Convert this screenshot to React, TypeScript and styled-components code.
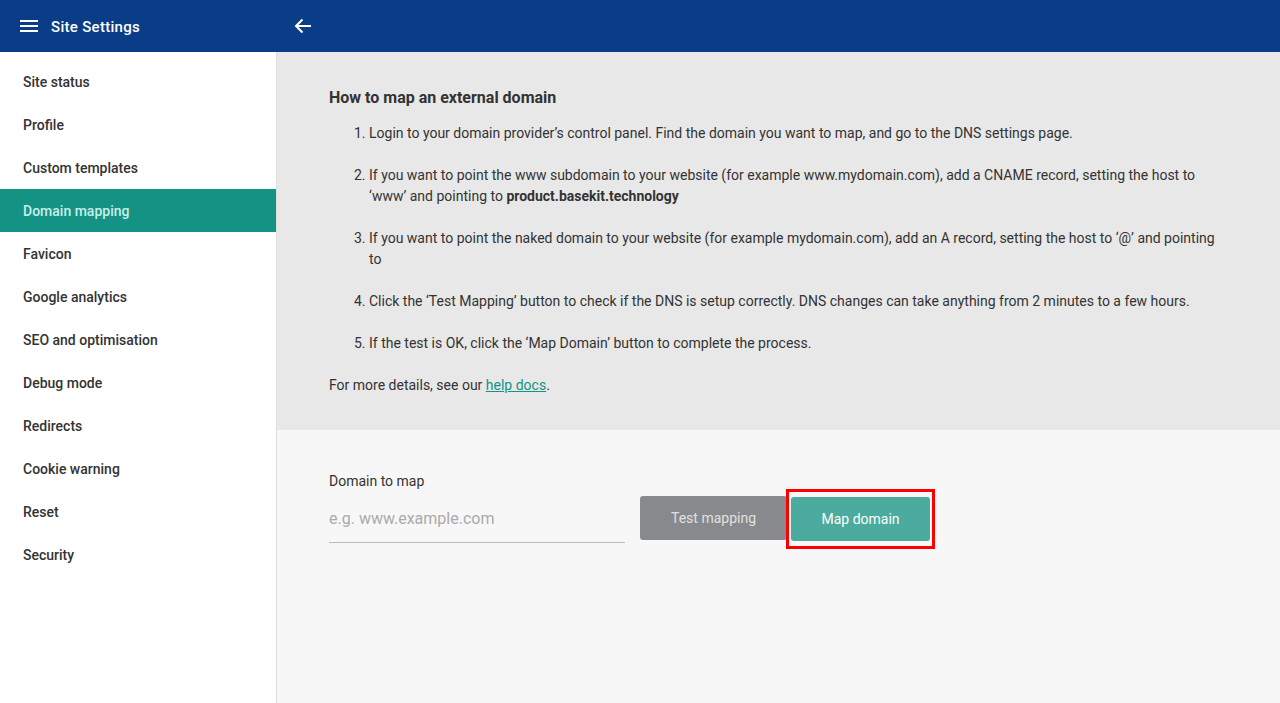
import React, { FC } from 'react';
import styled, { createGlobalStyle } from 'styled-components';

const GlobalStyle = createGlobalStyle`
  html, body {
    margin: 0;
    padding: 0;
    height: 100%;
  }
  body {
    font-family: Roboto, "Liberation Sans", sans-serif;
    color: #333;
  }
  #root {
    height: 100%;
  }
`;

const Page = styled.div`
  display: flex;
  flex-direction: column;
  height: 703px;
  overflow: hidden;
`;

const Header = styled.header`
  display: flex;
  align-items: center;
  height: 52px;
  flex-shrink: 0;
  background-color: #0a3d87;
  color: #fff;
`;

const HeaderLeft = styled.div`
  display: flex;
  align-items: center;
  width: 294px;
  padding-left: 20px;
  box-sizing: border-box;
`;

const Title = styled.h1`
  margin: 1px 0 0 13px;
  font-size: 15px;
  font-weight: 500;
  letter-spacing: 0.3px;
`;

const IconButton = styled.button`
  display: flex;
  align-items: center;
  justify-content: center;
  padding: 0;
  border: none;
  background: none;
  color: inherit;
  cursor: pointer;
`;

const Body = styled.div`
  display: flex;
  flex: 1;
  min-height: 0;
`;

const Sidebar = styled.nav`
  width: 276px;
  flex-shrink: 0;
  padding-top: 8px;
  background-color: #fff;
  border-right: 1px solid #ddd;
`;

const NavItem = styled.a<{ $active?: boolean }>`
  display: flex;
  align-items: center;
  height: 43px;
  padding-left: 23px;
  font-size: 14px;
  font-weight: 500;
  color: ${(p) => (p.$active ? '#c8efe9' : '#333')};
  background-color: ${(p) => (p.$active ? '#149384' : 'transparent')};
  text-decoration: none;
  cursor: pointer;
`;

const Main = styled.main`
  flex: 1;
  display: flex;
  flex-direction: column;
  background-color: #f7f7f7;
`;

const InfoPanel = styled.section`
  background-color: #e8e8e8;
  padding: 36px 52px 34px 52px;
  font-size: 14px;
  line-height: 21px;
`;

const Heading = styled.h2`
  margin: 0 0 15px;
  font-size: 16px;
  font-weight: 700;
  line-height: 20px;
`;

const Steps = styled.ol`
  margin: 0;
  padding-left: 40px;

  > li {
    margin-bottom: 21px;
  }
`;

const Link = styled.a`
  color: #149384;
  text-decoration: underline;
`;

const FormPanel = styled.section`
  padding: 43px 52px;
`;

const Label = styled.label`
  display: block;
  font-size: 14px;
`;

const FieldRow = styled.div`
  display: flex;
  align-items: flex-end;
`;

const Input = styled.input`
  box-sizing: border-box;
  width: 296px;
  height: 48px;
  padding: 0;
  border: none;
  border-bottom: 1px solid #bbb;
  background: transparent;
  font-family: inherit;
  font-size: 16px;
  color: #333;
  outline: none;

  &::placeholder {
    color: #aaa;
  }
`;

const Button = styled.button<{ $primary?: boolean }>`
  height: 44px;
  padding: 0;
  border: none;
  border-radius: 3px;
  font-family: inherit;
  font-size: 14px;
  color: ${(p) => (p.$primary ? '#fff' : '#e0e0e0')};
  background-color: ${(p) => (p.$primary ? '#4aab9e' : '#88898c')};
  cursor: pointer;
`;

const TestButton = styled(Button)`
  width: 147px;
  margin: 0 0 3px 15px;
`;

const MapButton = styled(Button)`
  width: 139px;
`;

const BackButton = styled(IconButton)`
  margin-left: 0;
`;

const Highlight = styled.div`
  display: flex;
  margin: 0 0 -6px -1px;
  padding: 5px 2px;
  border: 3px solid #f00;
`;

const steps: React.ReactNode[] = [
  "Login to your domain provider’s control panel. Find the domain you want to map, and go to the DNS settings page.",
  <>
    If you want to point the www subdomain to your website (for example www.mydomain.com), add a CNAME record, setting the host to
    ‘www’ and pointing to <b>product.basekit.technology</b>
  </>,
  "If you want to point the naked domain to your website (for example mydomain.com), add an A record, setting the host to ‘@’ and pointing to",
  "Click the ‘Test Mapping’ button to check if the DNS is setup correctly. DNS changes can take anything from 2 minutes to a few hours.",
  "If the test is OK, click the ‘Map Domain’ button to complete the process.",
];

const navItems = [
  'Site status',
  'Profile',
  'Custom templates',
  'Domain mapping',
  'Favicon',
  'Google analytics',
  'SEO and optimisation',
  'Debug mode',
  'Redirects',
  'Cookie warning',
  'Reset',
  'Security',
];

const App: FC = () => (
  <Page>
    <GlobalStyle />
    <Header>
      <HeaderLeft>
        <IconButton aria-label="Menu">
          <svg width="18" height="12" viewBox="0 0 18 12">
            <path d="M0 1h18M0 6h18M0 11h18" stroke="#fff" strokeWidth="2" />
          </svg>
        </IconButton>
        <Title>Site Settings</Title>
      </HeaderLeft>
      <BackButton aria-label="Back">
        <svg width="18" height="16" viewBox="0 0 18 16" fill="none" stroke="#fff" strokeWidth="2">
          <path d="M17 8H2M8.5 1.5L2 8l6.5 6.5" />
        </svg>
      </BackButton>
    </Header>
    <Body>
      <Sidebar>
        {navItems.map((item) => (
          <NavItem key={item} $active={item === 'Domain mapping'}>
            {item}
          </NavItem>
        ))}
      </Sidebar>
      <Main>
        <InfoPanel>
          <Heading>How to map an external domain</Heading>
          <Steps>
            {steps.map((s, i) => (
              <li key={i}>{s}</li>
            ))}
          </Steps>
          <div>
            For more details, see our <Link href="#">help docs</Link>.
          </div>
        </InfoPanel>
        <FormPanel>
          <Label htmlFor="domain">Domain to map</Label>
          <FieldRow>
            <Input id="domain" placeholder="e.g. www.example.com" />
            <TestButton>Test mapping</TestButton>
            <Highlight>
              <MapButton $primary>Map domain</MapButton>
            </Highlight>
          </FieldRow>
        </FormPanel>
      </Main>
    </Body>
  </Page>
);

export default App;
